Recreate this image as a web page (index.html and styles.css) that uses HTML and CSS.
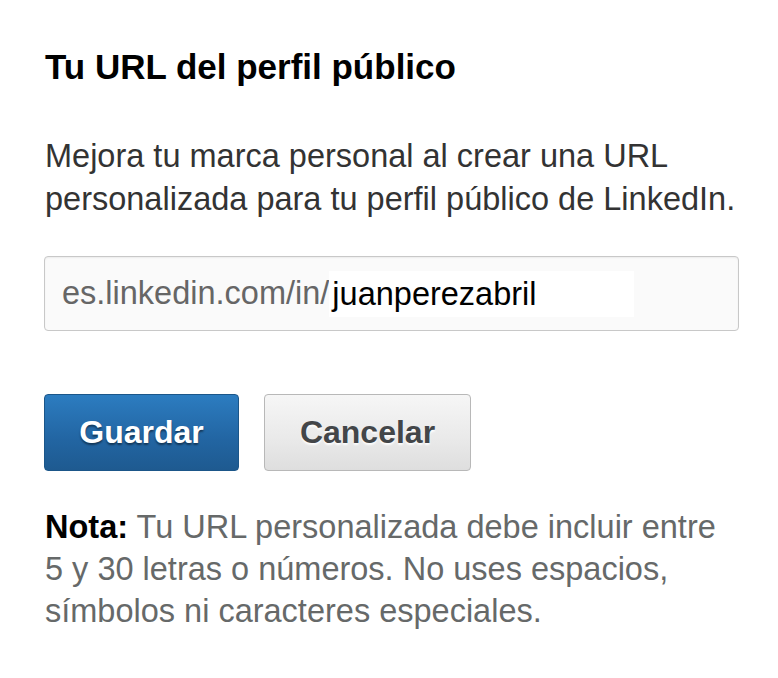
FILE: index.html
```html
<!DOCTYPE html>
<html lang="es">
<head>
<meta charset="utf-8">
<title>Tu URL del perfil público</title>
<link rel="stylesheet" href="styles.css">
</head>
<body>
<main class="panel">
  <h1 class="title">Tu URL del perfil público</h1>
  <p class="intro">Mejora tu marca personal al crear una URL<br>personalizada para tu perfil público de LinkedIn.</p>
  <div class="url-field">
    <span class="url-prefix">es.linkedin.com/in/</span><span class="url-input">juanperezabril</span>
  </div>
  <div class="actions">
    <button class="btn btn-primary" type="button">Guardar</button>
    <button class="btn btn-secondary" type="button">Cancelar</button>
  </div>
  <p class="note"><strong>Nota:</strong> Tu URL personalizada debe incluir entre<br>5 y 30 letras o números. No uses espacios,<br>símbolos ni caracteres especiales.</p>
</main>
</body>
</html>
```

FILE: styles.css
```css
html, body {
  margin: 0;
  padding: 0;
  background: #ffffff;
}

body {
  font-family: "Liberation Sans", Arial, Helvetica, sans-serif;
}

.panel {
  padding: 47px 39px 0 44px;
}

.title {
  margin: 0;
  font-size: 35px;
  line-height: 40px;
  font-weight: bold;
  color: #000000;
  padding-left: 1px;
}

.intro {
  margin: 48px 0 0;
  font-size: 32.5px;
  line-height: 43px;
  color: #333333;
  white-space: nowrap;
  padding-left: 1px;
}

.url-field {
  margin-top: 35px;
  height: 73px;
  border: 1px solid #c8c8c8;
  border-radius: 4px;
  background: #fafafa;
  box-shadow: inset 0 1px 2px rgba(0, 0, 0, 0.06);
  display: flex;
  align-items: center;
  padding-left: 17px;
  font-size: 32.5px;
}

.url-prefix {
  color: #666666;
}

.url-input {
  color: #000000;
  background: #ffffff;
  width: 302px;
  height: 46px;
  line-height: 46px;
  padding-left: 3px;
}

.actions {
  margin-top: 63px;
  display: flex;
  gap: 25px;
}

.btn {
  height: 77px;
  border-radius: 4px;
  font-family: "Liberation Sans", Arial, Helvetica, sans-serif;
  font-size: 32px;
  font-weight: bold;
  padding: 0;
  cursor: pointer;
}

.btn-primary {
  width: 195px;
  border: 1px solid #1b5689;
  background: linear-gradient(to bottom, #2c7cc0 0%, #2265a2 60%, #1e5a90 100%);
  color: #ffffff;
  text-shadow: 0 2px 2px rgba(0, 0, 0, 0.45);
}

.btn-secondary {
  width: 207px;
  border: 1px solid #b8b8b8;
  background: linear-gradient(to bottom, #f6f6f6 0%, #e9e9e9 60%, #dedede 100%);
  color: #434649;
  text-shadow: 0 2px 2px rgba(255, 255, 255, 0.9);
}

.note {
  margin: 35px 0 0;
  font-size: 32.5px;
  line-height: 42px;
  color: #666969;
  white-space: nowrap;
  padding-left: 1px;
}

.note strong {
  color: #000000;
  font-weight: bold;
}
```
